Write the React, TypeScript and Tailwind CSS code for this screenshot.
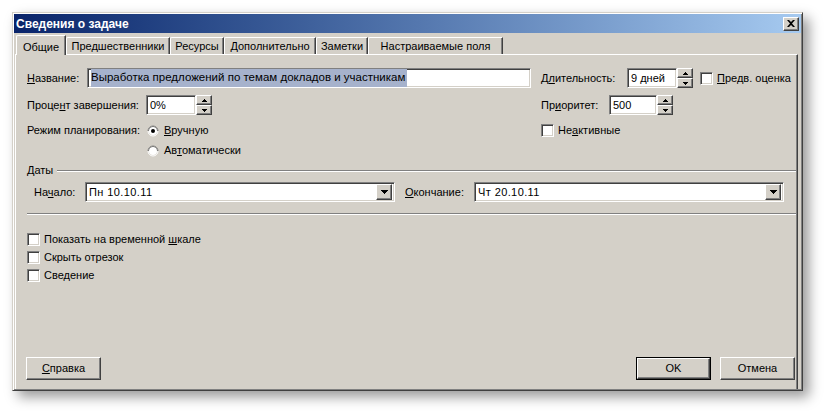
import React from 'react'

const raised =
  'bg-[#d4d0c8] border border-t-white border-l-white border-r-[#404040] border-b-[#404040] shadow-[inset_-1px_-1px_#808080]'
const sunken =
  'bg-white border border-t-[#808080] border-l-[#808080] border-r-white border-b-white shadow-[inset_1px_1px_#404040,inset_-1px_-1px_#d4d0c8]'

function Arrow({ up }: { up?: boolean }) {
  return (
    <svg width="5" height="3" viewBox="0 0 5 3">
      {up ? <path d="M2 0h1v1h1v1h1v1H0V2h1V1h1z" fill="#000" /> : <path d="M0 0h5v1H4v1H3v1H2V2H1V1H0z" fill="#000" />}
    </svg>
  )
}

function Spinner({ value, width }: { value: string; width: string }) {
  return (
    <div className="flex h-[20px]">
      <div className={`${sunken} ${width} flex h-[20px] items-center pl-[3px]`}>{value}</div>
      <div className="flex w-[16px] flex-col">
        <div className={`${raised} flex h-[10px] items-center justify-center`}>
          <Arrow up />
        </div>
        <div className={`${raised} flex h-[10px] items-center justify-center`}>
          <Arrow />
        </div>
      </div>
    </div>
  )
}

function Check({ label }: { label: React.ReactNode }) {
  return (
    <div className="flex h-[13px] items-center">
      <div className={`${sunken} h-[13px] w-[13px]`} />
      <span className="ml-[4px]">{label}</span>
    </div>
  )
}

function Radio({ label, checked }: { label: React.ReactNode; checked?: boolean }) {
  return (
    <div className="flex h-[13px] items-center">
      <svg width="12" height="12" viewBox="0 0 12 12">
        <path d="M11 6A5 5 0 0 0 1 6" fill="none" stroke="#808080" />
        <path d="M10 6A4 4 0 0 0 2 6" fill="none" stroke="#404040" />
        <circle cx="6" cy="6" r="4" fill="#fff" />
        <path d="M1 6a5 5 0 0 0 10 0" fill="none" stroke="#fff" />
        {checked && <circle cx="6" cy="6" r="2" fill="#000" />}
      </svg>
      <span className="ml-[5px]">{label}</span>
    </div>
  )
}

function Combo({ value }: { value: string }) {
  return (
    <div className={`${sunken} flex h-[20px] w-[310px] items-center justify-between pl-[3px] pr-[2px]`}>
      <span className="tracking-[0.4px]">{value}</span>
      <div className={`${raised} flex h-[16px] w-[16px] items-center justify-center`}>
        <svg width="7" height="4" viewBox="0 0 7 4">
          <path d="M0 0h7v1H6v1H5v1H4v1H3V3H2V2H1V1H0z" fill="#000" />
        </svg>
      </div>
    </div>
  )
}

function Button({ children, primary }: { children: React.ReactNode; primary?: boolean }) {
  return (
    <div className={primary ? 'border border-black' : ''}>
      <div
        className={`${raised} flex items-center justify-center ${primary ? 'h-[21px] w-[73px]' : 'h-[23px] w-[75px]'}`}
      >
        {children}
      </div>
    </div>
  )
}

const tabs = [
  { name: 'Предшественники', w: 'w-[104px]' },
  { name: 'Ресурсы', w: 'w-[54px]' },
  { name: 'Дополнительно', w: 'w-[92px]' },
  { name: 'Заметки', w: 'w-[52px]' },
  { name: 'Настраиваемые поля', w: 'w-[135px]' },
]

export default function App() {
  return (
    <div className="h-[411px] w-full bg-white pl-[12px] pt-[12px] font-['Liberation_Sans',Arial,sans-serif] text-[11px] text-black">
      <div className="flex h-[379px] w-[791px] flex-col border border-t-[#d4d0c8] border-l-[#d4d0c8] border-r-[#404040] border-b-[#404040] bg-[#d4d0c8] p-[1px] shadow-[inset_1px_1px_#fff,inset_-1px_-1px_#808080,6px_6px_12px_rgba(0,0,0,0.4)]">
        {/* title bar */}
        <div className="flex h-[19px] items-center justify-between bg-gradient-to-r from-[#0a246a] to-[#a6caf0] pl-[2px] pr-[2px]">
          <span className="text-[12px] font-bold text-white">Сведения о задаче</span>
          <div className={`${raised} flex h-[14px] w-[16px] items-center justify-center`}>
            <svg width="8" height="7" viewBox="0 0 8 7">
              <path d="M0 0h2l2 2 2-2h2L5 3.5 8 7H6L4 5 2 7H0l3-3.5z" fill="#000" />
            </svg>
          </div>
        </div>

        {/* tabs */}
        <div className="mt-[2px] flex h-[20px] items-end pl-[2px]">
          <div className="relative z-10 flex h-[20px] w-[50px] items-start justify-center rounded-tl-[2px] border-l border-t border-r border-l-white border-t-white border-r-[#404040] bg-[#d4d0c8] pt-[3px] shadow-[inset_-1px_0_#808080]">
            Общие
          </div>
          {tabs.map((t) => (
            <div
              key={t.name}
              className={`flex h-[18px] ${t.w} items-center justify-center rounded-tl-[2px] border-l border-t border-r border-l-white border-t-white border-r-[#404040] shadow-[inset_-1px_0_#808080]`}
            >
              {t.name}
            </div>
          ))}
        </div>

        {/* panel */}
        <div className="-mt-px ml-[1px] mr-[3px] flex flex-1 flex-col border-l border-t border-r border-l-white border-t-white border-r-[#404040] pl-[11px] pr-[1px] pt-[13px] shadow-[inset_-1px_0_#808080]">
          <div className="flex h-[20px] items-center">
            <div className="w-[60px]">
              <u>Н</u>азвание:
            </div>
            <div className={`${sunken} flex h-[20px] w-[444px] items-center pl-[3px]`}>
              <span className="bg-[#a6b2cc] pr-[2px] text-[11.5px]">
                Выработка предложений по темам докладов и участникам
              </span>
            </div>
            <div className="ml-[10px] w-[86px]">
              Д<u>л</u>ительность:
            </div>
            <Spinner value="9 дней" width="w-[50px]" />
            <div className="ml-[7px]">
              <Check
                label={
                  <>
                    <u>П</u>редв. оценка
                  </>
                }
              />
            </div>
          </div>

          <div className="mt-[7px] flex h-[20px] items-center">
            <div className="flex w-[514px] items-center">
              <div className="w-[119px]">
                Проце<u>н</u>т завершения:
              </div>
              <Spinner value="0%" width="w-[50px]" />
            </div>
            <div className="w-[68px]">
              Пр<u>и</u>оритет:
            </div>
            <Spinner value="500" width="w-[48px]" />
          </div>

          <div className="mt-[9px] flex h-[13px] items-center">
            <div className="flex w-[514px] items-center">
              <div className="w-[120px]">Режим планирования:</div>
              <Radio
                checked
                label={
                  <>
                    <u>В</u>ручную
                  </>
                }
              />
            </div>
            <Check
              label={
                <>
                  Не<u>а</u>ктивные
                </>
              }
            />
          </div>

          <div className="mt-[7px] flex h-[13px] items-center pl-[120px]">
            <Radio
              label={
                <>
                  Ав<u>т</u>оматически
                </>
              }
            />
          </div>

          <div className="mt-[7px] flex h-[13px] items-center">
            <span>Даты</span>
            <div className="ml-[4px] h-[2px] flex-1 border-t border-b border-t-[#808080] border-b-white" />
          </div>

          <div className="mt-[5px] flex h-[20px] items-center pl-[7px]">
            <div className="w-[51px]">
              На<u>ч</u>ало:
            </div>
            <Combo value="Пн 10.10.11" />
            <div className="ml-[10px] w-[69px]">
              <u>О</u>кончание:
            </div>
            <Combo value="Чт 20.10.11" />
          </div>

          <div className="mt-[11px] h-[2px] border-t border-b border-t-[#808080] border-b-white" />

          <div className="mt-[18px] flex flex-col gap-[5px]">
            <Check
              label={
                <>
                  Показать на временной <u>ш</u>кале
                </>
              }
            />
            <Check label="Скрыть отрезок" />
            <Check label="Сведение" />
          </div>

          <div className="mb-[9px] mt-auto flex items-center pr-[1px]">
            <div className="-ml-px">
              <Button>
                <span>
                  <u>С</u>правка
                </span>
              </Button>
            </div>
            <div className="ml-auto">
              <Button primary>OK</Button>
            </div>
            <div className="ml-[9px]">
              <Button>Отмена</Button>
            </div>
          </div>
        </div>
      </div>
    </div>
  )
}
